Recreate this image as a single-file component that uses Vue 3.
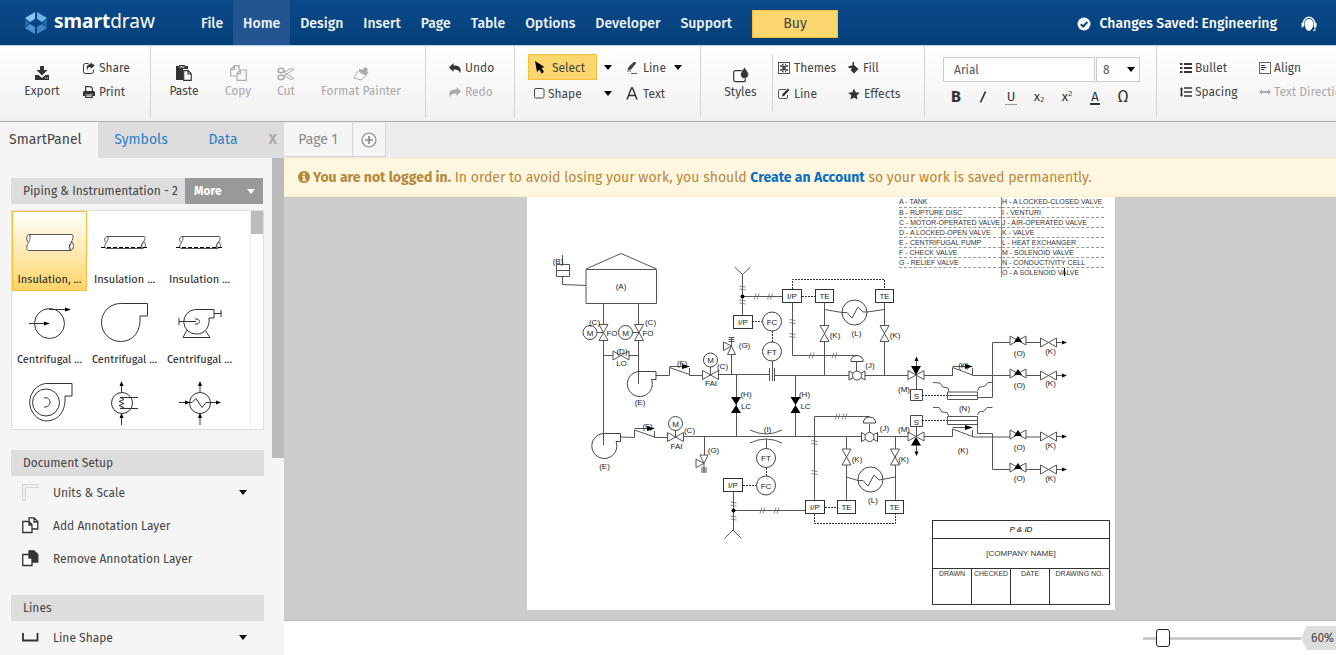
<script setup>
import { ref } from 'vue'

const menu = ['File', 'Home', 'Design', 'Insert', 'Page', 'Table', 'Options', 'Developer', 'Support']
const fontName = ref('Arial')
const zoom = ref(9)

const legend = [
  ['A - TANK', 'H - A LOCKED-CLOSED VALVE'],
  ['B - RUPTURE DISC', 'I - VENTURI'],
  ['C - MOTOR-OPERATED VALVE', 'J - AIR-OPERATED VALVE'],
  ['D - A LOCKED-OPEN VALVE', 'K - VALVE'],
  ['E - CENTRIFUGAL PUMP', 'L - HEAT EXCHANGER'],
  ['F - CHECK VALVE', 'M - SOLENOID VALVE'],
  ['G - RELIEF VALVE', 'N - CONDUCTIVITY CELL'],
  ['', 'O - A SOLENOID VALVE']
]

const pipes = [
  'M586 269.5H656.5V303.5H586ZM586 269L621 253.5L656.5 269',
  'M556.5 264.5H569.5V276.5H556.5ZM556.5 270.5H569.5M562.5 255V264M562.5 277V284.5L586 285.5',
  'M603.5 303V445M638.5 303V384M597 332.5H603M632.5 332.5H639',
  'M603.5 355.5H613M629 355.5H638.5',
  'M655.5 375.5H669.5V367.5L689.5 374.5M689.5 368V375.5H702M710.5 367V375',
  'M718 374.5H770M775 375.5H849M865 375.5H908M924 375.5H953',
  'M769.5 368V381M774.5 368V381M772.5 361V381',
  'M736.5 375V437M795.5 375V437M731.5 354V375',
  'M734.5 267L742.5 274.5L750.5 267M742.5 274V315M742.5 296.5H782',
  'M792.5 303V355.5H857M856.5 362V371',
  'M824.5 303V375M884.5 303V375',
  'M824.5 309.5L842 312.5H847L852 318L858 307L863 312H867L884.5 309.5',
  'M916.5 366V360M916.5 375V390M952.5 375.5V367.5L972.5 375M972.5 368V375.5H1010',
  'M1010 342.5H992.5V397.5H977.5M1026 342.5H1041M1056 342.5H1063M1026 375.5H1041M1056 375.5H1063',
  'M947.5 392H977.5V399.5H947.5ZM947.5 395.5H977.5M933 382.5L940 383L943 387L948 388L949 392M977.5 391L979 387.5L985 386L988 382.5H992',
  'M620.5 437L634.5 437.5V430L654.5 437M654.5 431V437.5H667M675.5 430V437',
  'M683 436.5H861M877 436.5H908M924 436.5H952.5V429L972.5 436.5M972.5 430V437H1010',
  'M704.5 437V455M766.5 439V448M733.5 491V530.5M733.5 510.5H805M724.5 538.5L733 530L741.5 538.5',
  'M750 430Q766 438 782 430M750 443Q766 435 782 443',
  'M814.5 500V416.5H869.5M869.5 424V432',
  'M846.5 437V500M895.5 437V500M846.5 477L858 480.5H863L868 486L874 475L879 480L895.5 477',
  'M916.5 427V437M916.5 445V452M1026 437H1041M1056 436.5H1063',
  'M977.5 424V433.5H992.5V469.5H1010M1026 469.5H1041M1056 469.5H1063',
  'M947.5 416.5H977.5V424.5H947.5ZM947.5 420.5H977.5M933 407.5H939L942 412L947 412.5L949 416M977.5 415L979 412L984 411L987 407.5H992.5',
  'M669.5 366.5H683M952.5 366.5H966M634.5 428.5H648M952.5 427.5H966'
]
const dashes = [
  'M792.5 289V279.5H884.5V289', 'M802 296.5H815', 'M752 321.5H762', 'M772.5 331V342', 'M922 395.5H947',
  'M922 420.5H947', 'M766.5 468V476', 'M743 485.5H756', 'M825 507.5H837', 'M814.5 514V523.5H895.5V514'
]
const boxes = [
  [782, 289, 20, 'I/P'], [815, 289, 19, 'TE'], [875, 289, 19, 'TE'], [733, 315, 20, 'I/P'],
  [723, 478, 20, 'I/P'], [805, 500, 20, 'I/P'], [837, 500, 19, 'TE'], [885, 500, 19, 'TE']
]
const circles = [
  [590, 332.5, 7, 'M'], [625.5, 332.5, 7, 'M'], [710.5, 360, 7, 'M'], [675.5, 423.5, 7, 'M'],
  [772, 321.5, 9.5, 'FC'], [772, 351.5, 9.5, 'FT'], [766, 458, 9.5, 'FT'], [766, 485.5, 9.5, 'FC']
]
const exchangers = [[854.5, 312.5], [870.5, 479.5]]
const valves = [
  [621, 355.5, 0], [603.5, 332.5, 90], [639, 332.5, 90], [710.5, 375, 0], [675.5, 437, 0],
  [824.5, 333.5, 90], [884.5, 333.5, 90], [846.5, 457, 90], [895, 457, 90],
  [916, 375, 0], [916, 436.5, 0], [1018, 340.5, 0], [1018, 373.5, 0], [1018, 434.5, 0], [1018, 467.5, 0],
  [1048.5, 342.5, 0], [1048.5, 375.5, 0], [1048.5, 436.5, 0], [1048.5, 469.5, 0]
]
const solids = [
  'M731 397H741L732 413H741Z', 'M731 397H741L736 405ZM731 413H741L736 405Z',
  'M790.5 397H800.5L795.5 405ZM790.5 413H800.5L795.5 405Z',
  'M911 366H921L916 375Z', 'M911 445.5H921L916 437Z',
  'M916.5 356.5L914.5 361H918.5ZM916.5 456L914.5 451.5H918.5Z',
  'M682 364V369L690 366.5ZM965 364V369L973 366.5ZM647 426V431L655 428.5ZM965 425V430L973 427.5Z',
  'M1014 342L1018 336L1022 342ZM1014 375L1018 369L1022 375ZM1014 436L1018 430L1022 436ZM1014 469L1018 463L1022 469Z',
  'M1062 340.5V344.5L1067 342.5ZM1062 373.5V377.5L1067 375.5ZM1062 434.5V438.5L1067 436.5ZM1062 467.5V471.5L1067 469.5Z'
].filter((_, i) => i > 0)
const hTicks = [[756, 296.5], [769.5, 296.5], [811, 355.5], [834, 355.5], [837, 416.5], [844, 416.5], [762, 510.5], [776, 510.5]]
const vTicks = [[742.5, 288], [742.5, 302], [792.5, 321.5], [792.5, 335.5], [814.5, 442.5], [814.5, 472.5], [733.5, 504], [733.5, 518]]
const labels = [
  [621, 285.5, '(A)'], [558, 260.5, '(B)'], [594.5, 322, '(C)'], [650.5, 322, '(C)'], [612, 333, 'FO'], [648, 333, 'FO'],
  [622, 351, '(D)'], [621.5, 362.5, 'LO'], [640, 401.5, '(E)'], [682, 362.5, '(F)'], [722.5, 365.5, '(C)'], [711, 382.5, 'FAI'],
  [744.5, 344.5, '(G)'], [746, 393.5, '(H)'], [746, 406, 'LC'], [804.5, 393.5, '(H)'], [805.5, 406, 'LC'],
  [856.5, 332.5, '(L)'], [835, 334.5, '(K)'], [895, 334.5, '(K)'], [870, 364.5, '(J)'], [904, 388.5, '(M)'], [963.5, 364.5, '(K)'],
  [1019.5, 352.5, '(O)'], [1050.5, 350.5, '(K)'], [1019.5, 384.5, '(O)'], [1050.5, 382.5, '(K)'], [964.5, 407.5, '(N)'],
  [604.5, 465.5, '(E)'], [647.5, 425.5, '(F)'], [689.5, 429.5, '(C)'], [676.5, 445.5, 'FAI'], [713.5, 449.5, '(G)'],
  [767.5, 428.5, '(I)'], [884.5, 427.5, '(J)'], [904, 428.5, '(M)'], [857, 458.5, '(K)'], [903.5, 458.5, '(K)'], [873, 499.5, '(L)'],
  [963, 449.5, '(K)'], [1019.5, 446.5, '(O)'], [1050.5, 444.5, '(K)'], [1019.5, 477.5, '(O)'], [1050.5, 477.5, '(K)'],
  [916.5, 395.5, 'S'], [916.5, 421.5, 'S']
]
</script>

<template>
  <div class="app">
    <header class="top">
      <a href="#" class="brand" aria-label="smartdraw">
        <svg width="24" height="24" viewBox="0 0 24 24">
          <path d="M11 1v7L6 11 1 7z" fill="#8ac4f8" /><path d="M13 1v7l5 3 5-4z" fill="#6fb2f0" />
          <path d="M1 8l5 4-5 4z" fill="#1f6aa8" /><path d="M23 8l-5 4 5 4z" fill="#1f6aa8" />
          <path d="M11 23v-7l-5-3-5 4z" fill="#4a92d2" /><path d="M13 23v-7l5-3 5 4z" fill="#3f86c6" />
        </svg>
        <span class="word"><b>smart</b>draw</span>
      </a>
      <nav class="menu">
        <a v-for="m in menu" :key="m" href="#" :class="{ on: m === 'Home' }">{{ m }}</a>
      </nav>
      <button class="buy">Buy</button>
      <div class="saved">
        <svg width="14" height="14" viewBox="0 0 14 14"><circle cx="7" cy="7" r="6.5" fill="#fff" /><path d="M3.8 7.2L6.2 9.5 10.4 4.8" fill="none" stroke="#06427e" stroke-width="2" /></svg>
        <span>Changes Saved: Engineering</span>
      </div>
      <button class="help" aria-label="Help">
        <svg width="16" height="16" viewBox="0 0 16 16"><path d="M2.5 10V7a5.5 5.8 0 0 1 11 0v4" fill="none" stroke="#fff" stroke-width="1.4" /><rect x=".5" y="6.5" width="2" height="5" rx="1" fill="#fff" /><rect x="13.5" y="6.5" width="2" height="5" rx="1" fill="#fff" /><path d="M8 3c3 0 4.300 2 4.300 5S10.500 14.500 8 15 3.700 11 3.700 8 5 3 8 3z" fill="#fff" /><path d="M14 11v3.500h-2" fill="none" stroke="#fff" /></svg>
      </button>
    </header>

    <div class="ribbon">
      <section class="group g-file">
        <button class="big"><svg width="16" height="16" viewBox="0 0 16 16" fill="#333"><path d="M6 1h4v4h3.500L8 10.500 2.500 5H6z" /><path d="M1 10h3.500L8 13l3.500-3H15v5H1z" /><path d="M11 13h1M13 13h1" stroke="#fff" /></svg><span>Export</span></button>
        <div class="stack">
          <button class="sm"><svg width="12" height="12" viewBox="0 0 12 12"><path d="M5.500 1.500h-3a2 2 0 0 0-2 2v6a2 2 0 0 0 2 2h6a2 2 0 0 0 2-2V8" fill="none" stroke="#333" /><path d="M7.500.500L11.800 3.500 7.500 7V5C5 4.800 4.300 6 4.300 9 2.800 5 4 2.300 7.500 2.300z" fill="#333" /></svg>Share</button>
          <button class="sm"><svg width="12" height="12" viewBox="0 0 12 12"><path d="M2.700 5V.700h5l1.600 1.600V5M2.700 9h6.600v2.400H2.700z" fill="#fff" stroke="#333" stroke-width="1.200" /><path d="M1 5h10l1 1v4H9.600V8H2.400v2H0V6z" fill="#333" /></svg>Print</button>
        </div>
      </section>
      <section class="group g-clip">
        <button class="big"><svg width="16" height="16" viewBox="0 0 16 16"><path d="M0 1h3V0h6v1h3v3H7v11H0z" fill="#333" /><path d="M3.500 2h5" stroke="#fff" /><path d="M7.700 5.700h4.500l3 3v6.600H7.700zM12 6v3h3" fill="#fff" stroke="#333" stroke-width="1.200" /></svg><span>Paste</span></button>
        <button class="big off"><svg width="17" height="16" viewBox="0 0 17 16" fill="none" stroke="#aaa" stroke-width="1.200"><path d="M9 5V.600H4.500L.600 4.500V11H7M4.500 1v3.500H1M7 8.500L10.500 5h5.700v10.300H7zM10.500 5v3.700H7" /></svg><span>Copy</span></button>
        <button class="big off"><svg width="18" height="14" viewBox="0 0 18 14" fill="none" stroke="#aaa" stroke-width="1.500"><ellipse cx="4" cy="3.500" rx="3" ry="2.200" /><ellipse cx="4" cy="10.500" rx="3" ry="2.200" /><path d="M6.500 5L17 11.500l-3 1L6.500 8.500M6.500 9L17 2.500l-3-1L6.500 5.500" stroke-width="1" /></svg><span>Cut</span></button>
        <button class="big off"><svg width="16" height="14" viewBox="0 0 16 14"><path d="M5 4L1 11l7 2 6-5" fill="#fff" stroke="#aaa" /><path d="M6 2l4 .500L12 0l3 2-1 2 1.500 2L12 8.500 6 5z" fill="#aaa" /></svg><span>Format Painter</span></button>
      </section>
      <section class="group g-undo">
        <div class="stack">
          <button class="sm"><svg width="12" height="12" viewBox="0 0 12 12"><path d="M4.500 1v2.500c5.500 0 8.500 2 6.500 8-.5-3-2-4-6.500-4V10L0 5.500z" fill="#333" /></svg>Undo</button>
          <button class="sm off"><svg width="12" height="12" viewBox="0 0 12 12"><path d="M7.500 1v2.500C2 3.500-1 5.500 1 11.500c.5-3 2-4 6.500-4V10L12 5.500z" fill="#aaa" /></svg>Redo</button>
        </div>
      </section>
      <section class="group g-tools">
        <button class="sm select"><svg width="12" height="13" viewBox="0 0 12 13"><path d="M1 0l9.500 6-3 1L10 11l-2.500 1.500-2-4L3 11z" fill="#000" /></svg>Select</button>
        <button class="drop" aria-label="Select options"><i class="caret"></i></button>
        <button class="sm line"><svg width="12" height="12" viewBox="0 0 12 12"><path d="M8 0l2 1-5 6-3 1 1-3zM1 9h4" fill="#444" stroke="#444" stroke-width=".800" /><path d="M5 11.500h6" stroke="#555" /></svg>Line</button>
        <button class="drop" aria-label="Line options"><i class="caret"></i></button>
        <button class="sm shape"><svg width="11" height="11" viewBox="0 0 11 11"><rect x=".500" y=".500" width="9.500" height="9.500" rx="1.500" fill="none" stroke="#444" /></svg>Shape</button>
        <button class="drop" aria-label="Shape options"><i class="caret"></i></button>
        <button class="sm line"><svg width="12" height="13" viewBox="0 0 12 13"><path d="M1 12.500L5.500 1h1L11 12.500M2.800 8.500h6.400" fill="none" stroke="#333" stroke-width="1.500" /></svg>Text</button>
      </section>
      <section class="group g-style">
        <button class="big styles"><svg width="16" height="17" viewBox="0 0 16 17"><rect x=".700" y="4.700" width="11.600" height="11" rx="2" fill="#fff" stroke="#333" stroke-width="1.200" /><path d="M11.500 1c2 3.500 4 5.500 4 7.500a4 4 0 0 1-8 0c0-2 2-4 4-7.500z" fill="#333" stroke="#fff" stroke-width=".600" /></svg><span>Styles</span></button>
        <div class="stylegrid">
          <button class="sm"><svg width="12" height="12" viewBox="0 0 12 12"><rect x=".500" y=".500" width="11" height="11" fill="none" stroke="#555" /><path d="M2 4h2M2 8h2M8 4h2M8 8h2M4 2.500h1.500M7 2.500h1M4 9.500h1.500M7 9.500h1M5 4.500h2v3H5z" stroke="#333" stroke-width="1.500" fill="none" /></svg>Themes</button>
          <button class="sm"><svg width="11" height="12" viewBox="0 0 11 12"><path d="M4.500 0h1.500v3l4.500 4-4.500 4.500-3.500-3.500L4 6.500 0 5.500l1-1.500 3.500-.500z" fill="#333" /></svg>Fill</button>
          <button class="sm"><svg width="12" height="12" viewBox="0 0 12 12"><path d="M8 1.500H2a1.500 1.500 0 0 0-1.500 1.500v6A1.500 1.500 0 0 0 2 10.500h6A1.500 1.500 0 0 0 9.500 9V7" fill="none" stroke="#555" /><path d="M10 .500l1.500 1.500L6 8l-2 .500L4.500 6z" fill="#333" /></svg>Line</button>
          <button class="sm"><svg width="12" height="12" viewBox="0 0 12 12"><path d="M6 .500l1.700 3.700 4 .500-3 2.800.800 4L6 9.500l-3.500 2 .800-4-3-2.800 4-.500z" fill="#333" /></svg>Effects</button>
        </div>
      </section>
      <section class="group g-font">
        <div class="fontrow">
          <input v-model="fontName" type="text" aria-label="Font" />
          <span class="size"><select aria-label="Font size"><option>8</option></select><i class="caret"></i></span>
        </div>
        <div class="marks">
          <button class="bold" aria-label="Bold">B</button>
          <button aria-label="Italic"><svg width="8" height="12" viewBox="0 0 8 12"><path d="M1.500 11.500L6.500.500" stroke="#333" stroke-width="1.700" /></svg></button>
          <button class="under" aria-label="Underline"><span>U</span></button>
          <button class="subs" aria-label="Subscript">x<small>2</small></button>
          <button class="subs" aria-label="Superscript">x<small class="up">2</small></button>
          <button class="color" aria-label="Text color"><span>A</span></button>
          <button class="omega" aria-label="Insert symbol">Ω</button>
        </div>
      </section>
      <section class="group g-para">
        <button class="sm"><svg width="12" height="10" viewBox="0 0 12 10"><path d="M0 1h2.500M0 5h2.500M0 9h2.500M4 1h8M4 5h8M4 9h8" stroke="#333" stroke-width="1.800" /></svg>Bullet</button>
        <button class="sm"><svg width="12" height="12" viewBox="0 0 12 12"><rect x=".500" y=".500" width="11" height="11" fill="none" stroke="#666" /><path d="M2 3.500h4M2 5.500h5.500M2 7.500h3.500" stroke="#333" /></svg>Align</button>
        <button class="sm"><svg width="12" height="10" viewBox="0 0 12 10"><path d="M1.500 1v8M4 1h8M4 5h8M4 9h8" stroke="#333" stroke-width="1.600" /><path d="M1.500 0L3 2.500H0zM1.500 10L3 7.500H0z" fill="#333" /></svg>Spacing</button>
        <button class="sm off"><svg width="12" height="6" viewBox="0 0 12 6"><path d="M0 3l3-3v2h6V0l3 3-3 3V4H3v2z" fill="#aaa" /></svg>Text Direction</button>
      </section>
    </div>

    <main class="work">
      <aside class="side">
        <div class="tabs">
          <button class="tab on">SmartPanel</button>
          <button class="tab">Symbols</button>
          <button class="tab">Data</button>
          <button class="close" aria-label="Close panel">X</button>
        </div>
        <div class="sidebody">
          <div class="panel">
            <div class="lib"><span>Piping &amp; Instrumentation - 2</span><button>More<i class="caret"></i></button></div>
            <div class="symbols">
              <div class="cells">
                <button class="cell on"><svg width="75" height="60" viewBox="0 0 75 60"><path d="M17 23.500H60c2 0 1 5-1 8s-1 8 0 8H16c-3-2 0-7 1-9s2-7 0-7c-3 1-3 5-1 8M60 31c2 2 2 8-1 8s-2-6 1-8" fill="#fff" stroke="#555" /></svg><span>Insulation, ...</span></button>
                <button class="cell"><svg width="75" height="60" viewBox="0 0 75 60"><path d="M20 25.500H57c2 0 1 4-1 6s-1 6 0 6H19c-3-2 0-5 1-7s2-5 0-5c-3 1-3 4-1 6M57 31c2 2 2 6-1 6s-2-4 1-6" fill="#fff" stroke="#555" /><path d="M14 36.500H61" stroke="#000" stroke-dasharray="4 2" /></svg><span>Insulation ...</span></button>
                <button class="cell"><svg width="75" height="60" viewBox="0 0 75 60"><path d="M20 25.500H57c2 0 1 4-1 6s-1 6 0 6H19c-3-2 0-5 1-7s2-5 0-5c-3 1-3 4-1 6M57 31c2 2 2 6-1 6s-2-4 1-6" fill="#fff" stroke="#555" /><path d="M14 36.500H61" stroke="#000" stroke-dasharray="4 2" /></svg><span>Insulation ...</span></button>
                <button class="cell"><svg width="75" height="60" viewBox="0 0 75 60" fill="none" stroke="#333"><circle cx="37.500" cy="32.500" r="15" /><path d="M17 32.500H33M37 18.500H54" /><path d="M32 30.500v4l6-2zM53 16.500v4l6-2z" fill="#000" stroke="none" /></svg><span>Centrifugal ...</span></button>
                <button class="cell"><svg width="75" height="60" viewBox="0 0 75 60" fill="none" stroke="#333"><path d="M33.500 12.500H60.500V25H53C54 41 46 50.500 33.500 50.500A19 19 0 0 1 33.500 12.500z" /></svg><span>Centrifugal ...</span></button>
                <button class="cell"><svg width="75" height="60" viewBox="0 0 75 60" fill="none" stroke="#333"><path d="M33.500 18.500H52V27H47C48 36 43 43 34.500 43A12 12 0 0 1 33.500 18.500zM52 22.500H59M59 19V26M17 30.500H34M17 27V34M25 39L21 46.500H48L43 39M33 28c6-1 6 6 0 5" /></svg><span>Centrifugal ...</span></button>
                <button class="cell"><svg width="75" height="60" viewBox="0 0 75 60" fill="none" stroke="#333"><path d="M33.500 12.500H60V25H53C54 41 46 50 33.500 50A19 19 0 0 1 33.500 12.500z" /><circle cx="34" cy="31.500" r="13.500" /><path d="M32 27c8-2 8 10 0 9" /></svg></button>
                <button class="cell"><svg width="75" height="60" viewBox="0 0 75 60" fill="none" stroke="#333"><circle cx="35" cy="32" r="10.500" /><path d="M34.500 21V13M34.500 43V54M51 26.500H33l4 2-5 2 5 2-5 2 5 2-4 1H51" /><path d="M32.500 15h4l-2-5zM32.500 47h4l-2-5z" fill="#000" stroke="none" /></svg></button>
                <button class="cell"><svg width="75" height="60" viewBox="0 0 75 60" fill="none" stroke="#333"><circle cx="38" cy="32" r="10.500" /><path d="M38 21V13M38 43V54M17 31.500H30l4-4 6 9 4-5H55" /><path d="M36 15h4l-2-5zM36 47h4l-2-5zM23 29.500v4l5-2zM54 29.500v4l5-2z" fill="#000" stroke="none" /></svg></button>
              </div>
              <div class="track"><i></i></div>
            </div>
            <h2>Document Setup</h2>
            <button class="row"><svg width="17" height="17" viewBox="0 0 17 17"><path d="M.500 16.500V.500H16.500V3.500H3.500V16.500z" fill="#eee" stroke="#bbb" stroke-dasharray="1 1" /></svg>Units &amp; Scale<i class="caret"></i></button>
            <button class="row"><svg width="17" height="17" viewBox="0 0 17 17" fill="#fff" stroke="#333" stroke-width="1.300"><path d="M7 4V.800H12L15.800 4.500V12H10M12 1v4h4M.800 4.500H7l3 3v8H.800zM7 4.500v3.500h3" /></svg>Add Annotation Layer</button>
            <button class="row"><svg width="17" height="17" viewBox="0 0 17 17" stroke="#333" stroke-width="1.300"><path d="M7 4V.800H12L15.800 4.500V12H10z" fill="#333" /><path d="M.800 4.500H7l3 3v8H.800zM7 4.500v3.500h3" fill="#fff" /></svg>Remove Annotation Layer</button>
            <h2>Lines</h2>
            <button class="row"><svg width="17" height="9" viewBox="0 0 17 9"><path d="M1 0V7.500H15.500V0" fill="none" stroke="#333" stroke-width="1.800" /></svg>Line Shape<i class="caret"></i></button>
          </div>
          <div class="scroll"><i></i></div>
        </div>
      </aside>

      <div class="doc">
        <div class="pages">
          <button class="page">Page 1</button>
          <button class="plus" aria-label="Add page"><svg width="16" height="16" viewBox="0 0 16 16" fill="none" stroke="#888" stroke-width="1.200"><circle cx="8" cy="8" r="7" /><path d="M8 4v8M4 8h8" stroke-width="1.600" /></svg></button>
        </div>
        <p class="alert">
          <svg width="12" height="12" viewBox="0 0 12 12"><circle cx="6" cy="6" r="6" fill="#b4893c" /><path d="M5 2h2v1.700H5zM4.300 4.800H7v3.800h1V10H4.200V8.600h1V6.200h-.900z" fill="#fff6df" /></svg>
          <b>You are not logged in.</b> In order to avoid losing your work, you should <a href="#">Create an Account</a> so your work is saved permanently.
        </p>
        <div class="canvas">
          <div class="sheet">
            <svg class="diagram" viewBox="527 197 588 413">
              <defs>
                <path id="bow" d="M-8 -4.500V4.500L8 -4.500V4.500Z" fill="#fff" stroke="#555" />
                <path id="pump" d="M0 -12.500H17V-4.500H12.500A12.500 12.500 0 1 1 0 -12.500" fill="none" stroke="#444" />
                <g id="air" fill="#fff" stroke="#444"><path d="M-8 -4.500V4.500L8 -4.500V4.500Z" /><circle r="4.500" /><path d="M-6 -14V-16Q-5 -20 0 -20T6 -16V-14Z" /></g>
                <path id="relief" d="M0 0L-4 8.500H4ZM0 0L-8 -4V4.500ZM0 0V-9M-3 -8.500H3M-3 -6.500H3M-3 -4.500H3" fill="#fff" stroke="#555" />
              </defs>
              <g fill="none" stroke="#555"><path v-for="(d, i) in pipes" :key="i" :d="d" /></g>
              <g fill="none" stroke="#333" stroke-dasharray="2 1"><path v-for="(d, i) in dashes" :key="i" :d="d" /></g>
              <use v-for="(v, i) in valves" :key="'v' + i" href="#bow" :transform="`translate(${v[0]} ${v[1]}) rotate(${v[2]})`" />
              <use href="#pump" transform="translate(639 384)" />
              <use href="#pump" transform="translate(603.500 446)" />
              <use href="#air" transform="translate(857 375.500)" />
              <use href="#air" transform="translate(869.500 437)" />
              <use href="#relief" transform="translate(731.500 346)" />
              <use href="#relief" transform="translate(704 463.500) scale(1 -1)" />
              <g fill="none" stroke="#444">
                <circle v-for="(e, i) in exchangers" :key="i" :cx="e[0]" :cy="e[1]" r="12.500" />
              </g>
              <g fill="none" stroke="#666" stroke-width=".800">
                <path v-for="(t, i) in hTicks" :key="'h' + i" :d="`M${t[0] - 2} ${t[1] + 3}l2 -6M${t[0] + 1} ${t[1] + 3}l2 -6`" />
                <path v-for="(t, i) in vTicks" :key="'t' + i" :d="`M${t[0] - 3} ${t[1] - 2}l6 1M${t[0] - 3} ${t[1] + 1}l6 1`" />
              </g>
              <g fill="#000"><path v-for="(d, i) in solids" :key="i" :d="d" /><circle cx="742.500" cy="296.500" r="2" /><circle cx="733.500" cy="510.500" r="2" /></g>
              <g v-for="(c, i) in circles" :key="'c' + i"><circle :cx="c[0]" :cy="c[1]" :r="c[2]" fill="#fff" stroke="#444" /><text :x="c[0]" :y="c[1] + 3">{{ c[3] }}</text></g>
              <g v-for="(b, i) in boxes" :key="'b' + i"><rect :x="b[0] + 0.5" :y="b[1] + 0.5" :width="b[2] - 1" height="13" fill="#fff" stroke="#333" /><text :x="b[0] + b[2] / 2" :y="b[1] + 10">{{ b[3] }}</text></g>
              <path d="M910.500 389.500H922.500V400.500H910.500ZM910.500 415.500H922.500V426.500H910.500Z" fill="#fff" stroke="#444" />
              <text v-for="(l, i) in labels" :key="'l' + i" :x="l[0]" :y="l[1] + 3">{{ l[2] }}</text>
            </svg>
            <table class="legend">
              <tbody><tr v-for="(r, i) in legend" :key="i"><td>{{ r[0] }}</td><td>{{ r[1] }}</td></tr></tbody>
            </table>
            <i class="cursor"></i>
            <table class="title">
              <colgroup><col class="c1" /><col class="c1" /><col class="c1" /><col /></colgroup>
              <tbody>
                <tr class="t1"><td colspan="4">P &amp; ID</td></tr>
                <tr class="t2"><td colspan="4">[COMPANY NAME]</td></tr>
                <tr class="t3"><td>DRAWN</td><td>CHECKED</td><td>DATE</td><td>DRAWING NO.</td></tr>
              </tbody>
            </table>
          </div>
        </div>
        <footer class="status">
          <input v-model="zoom" type="range" min="0" max="100" aria-label="Zoom" />
          <output>60%</output>
        </footer>
      </div>
    </main>
  </div>
</template>

<style>
html, body { overflow: hidden; }
</style>

<style scoped>
.app { height: 100vh; display: flex; flex-direction: column; overflow: hidden; font: 12px/16px "Fira Sans", "Noto Sans", sans-serif; color: #444; background: #f5f5f5; }
.app * { box-sizing: border-box; }
button { font: inherit; color: inherit; background: none; border: 0; padding: 0; margin: 0; white-space: nowrap; }
a { text-decoration: none; }
svg { flex: none; display: block; }
.caret { width: 0; height: 0; border: 4px solid transparent; border-top: 5px solid #000; border-bottom: 0; }

.top { flex: none; height: 46px; display: flex; align-items: center; background: linear-gradient(#0a4a8a, #053f78); border-bottom: 1px solid #bcd0e4; color: #fff; overflow: hidden; }
.brand { flex: none; display: flex; align-items: center; gap: 6px; width: 191px; padding-left: 24px; color: #fff; }
.word { font: 19px/24px "Noto Sans", sans-serif; padding-bottom: 3px; }
.menu { display: flex; align-self: stretch; }
.menu a { padding: 0 10px; line-height: 47px; font-size: 14px; font-weight: 500; color: #f0f5fa; }
.menu a.on { background: #225590; }
.buy { flex: none; width: 86px; height: 28px; margin: 2px 0 0 10px; background: #fcd76e; border: 1px solid #fbbc37; color: #444; font-size: 14px; }
.saved { flex: none; margin-left: auto; display: flex; align-items: center; gap: 8px; font-size: 14px; font-weight: 500; white-space: nowrap; padding-top: 3px; }
.help { margin: 2px 19px 0 24px; }

.ribbon { flex: none; height: 76px; display: flex; padding-bottom: 4px; background: linear-gradient(#fff, #f1f1f1); border-bottom: 1px solid #aaa; overflow: hidden; }
.group { flex: none; display: flex; border-right: 1px solid #d4d4d4; }
.big { display: flex; flex-direction: column; align-items: center; justify-content: flex-end; gap: 2px; height: 53px; }
.off { color: #aaa; }
.sm { display: flex; align-items: center; gap: 4px; height: 24px; }
.stack { display: flex; flex-direction: column; padding-top: 10px; }
.g-file { width: 151px; padding-left: 17px; }
.g-file .big { width: 50px; margin-right: 16px; }
.g-clip { width: 275px; padding-left: 8px; }
.g-clip .big { width: 50px; }
.g-clip .big:nth-child(2) { width: 58px; }
.g-clip .big:nth-child(3) { width: 38px; }
.g-clip .big:nth-child(4) { width: 112px; }
.g-undo { width: 89px; padding-left: 23px; }
.g-tools { width: 186px; padding: 8px 0 0 13px; display: grid; grid-template-columns: 69px 29px 47px 26px; grid-auto-rows: 26px; align-content: start; }
.g-tools .sm { height: 27px; }
.g-tools .select { height: 26px; padding: 1px 0 0 5px; gap: 6px; background: #fcd76e; border: 1px solid #fbbc37; color: #444; }
.drop { display: flex; align-items: center; padding-left: 7px; }
.g-tools .drop:nth-child(4) { padding-left: 1px; }
.shape { padding-left: 6px; gap: 3px; }
.line { gap: 5px; }
.g-style { width: 224px; padding-left: 8px; }
.styles { width: 63px; height: 54px; gap: 1px; }
.stylegrid { margin: 8px 0 6px; padding: 2px 0 0 5px; border-left: 1px solid #d4d4d4; display: grid; grid-template-columns: 70px 60px; grid-auto-rows: 26px; align-content: start; }
.g-font { width: 232px; flex-direction: column; padding: 11px 0 0 18px; }
.fontrow { display: flex; gap: 1px; }
.fontrow input { width: 152px; height: 25px; border: 1px solid #ccc; padding: 0 10px; font: inherit; color: #555; background: #fff; }
.size { position: relative; }
.size select { appearance: none; width: 44px; height: 25px; border: 1px solid #ccc; border-radius: 0; padding: 0 6px; font: inherit; color: #555; background: #fff; }
.size .caret { position: absolute; right: 5px; top: 10px; }
.marks { display: grid; grid-template-columns: 26px repeat(6, 28px); margin-top: 4px; height: 22px; font-size: 13px; color: #333; }
.marks button { display: flex; align-items: center; justify-content: center; }
.bold { font-weight: 700; font-size: 16px; }
.under span { border-bottom: 1px solid #999; line-height: 14px; padding: 0 2px; }
.color span { border-bottom: 2px solid #333; line-height: 13px; padding: 0 1px; }
.subs small { font-size: 8px; padding-top: 6px; }
.subs small.up { padding: 0 0 6px; }
.omega { font-size: 16px; }
.g-para { border: 0; width: 220px; padding: 10px 0 0 23px; display: grid; grid-template-columns: 79px 118px; grid-auto-rows: 24px; align-content: start; }
.g-para .sm { gap: 3px; }

.work { flex: 1; min-height: 0; display: flex; }
.side { flex: none; width: 284px; display: flex; flex-direction: column; min-height: 0; }
.tabs { flex: none; height: 36px; display: flex; background: #ddd; font-size: 14px; }
.tab { color: #2a7dc4; width: 86px; }
.tab.on { width: 98px; background: #f5f5f5; color: #444; text-align: left; padding-left: 9px; }
.tab:nth-child(3) { width: 78px; }
.close { margin-left: auto; padding-right: 7px; color: #aaa; font-weight: 700; }
.sidebody { flex: 1; min-height: 0; display: flex; }
.panel { flex: 1; padding: 20px 8px 0 11px; overflow: hidden; }
.lib { display: flex; height: 26px; margin-right: 1px; background: #ddd; line-height: 26px; white-space: nowrap; }
.lib span { flex: 1; min-width: 0; padding-left: 12px; overflow: hidden; }
.lib button { flex: none; width: 78px; background: #999; color: #fff; font-weight: 700; display: flex; align-items: center; justify-content: space-between; padding: 0 8px 0 9px; }
.lib .caret { border-top-color: #fff; }
.symbols { margin-top: 6px; height: 220px; display: flex; background: #fff; border: 1px solid #ddd; overflow: hidden; }
.cells { flex: 1; display: grid; grid-template-columns: repeat(3, 75px); grid-auto-rows: 80px; }
.cell { display: flex; flex-direction: column; align-items: center; justify-content: flex-start; border: 1px solid transparent; color: #222; font-size: 11px; overflow: hidden; }
.cell svg { margin: -1px -1px 0; }
.cell span { line-height: 18px; }
.cell.on { border-color: #fbbc37; background: linear-gradient(#fff, #fcd468); }
.track { width: 13px; border-left: 1px solid #eee; }
.track i { display: block; height: 23px; background: #bbb; }
h2 { margin: 20px 0 0; height: 26px; padding-left: 12px; background: #ddd; font: inherit; line-height: 26px; }
.row { display: flex; align-items: center; width: 100%; height: 33px; padding: 0 17px 0 11px; gap: 14px; }
.row .caret { margin-left: auto; }
.scroll { width: 12px; background: #f5f5f5; }
.scroll i { display: block; height: 300px; background: #bbb; }

.doc { flex: 1; min-width: 0; display: flex; flex-direction: column; }
.pages { flex: none; height: 36px; padding: 1px 0; display: flex; background: #ececec; }
.page, .plus { background: #f5f5f5; border: 1px solid #d4d4d4; border-width: 0 1px 1px 0; color: #888; font-size: 14px; width: 69px; }
.plus { width: 33px; display: flex; align-items: center; justify-content: center; }
.alert { flex: none; display: block; height: 39px; margin: 0; padding: 0 14px; background: #fff6df; border: 1px solid #fbeed0; border-width: 1px 0; color: #b4893c; font-size: 14px; line-height: 37px; white-space: nowrap; overflow: hidden; }
.alert svg { display: inline-block; vertical-align: -1px; margin-right: 3px; }
.alert a { color: #0b6fbe; font-weight: 700; }
.canvas { flex: 1; min-height: 0; display: flex; justify-content: center; align-items: flex-start; padding-left: 22px; background: #ccc; overflow: hidden; }
.sheet { flex: none; position: relative; width: 588px; background: #fff; font-family: "Liberation Sans", Arial, sans-serif; color: #333; }
.diagram { width: 100%; }
.diagram text { font-size: 8px; text-anchor: middle; fill: #222; }
table { border-collapse: collapse; table-layout: fixed; position: absolute; }
td { padding: 0; }
.legend { left: 372px; top: 0; width: 205px; font-size: 7px; line-height: 9px; white-space: nowrap; }
.legend td { height: 10px; border-bottom: 1px dashed #999; }
.legend td + td { border-left: 1px solid #888; }
.legend tr:last-child td { border-bottom: 0; }
.cursor { position: absolute; left: 537px; top: 71px; width: 1px; height: 8px; background: #000; }
.title { right: 5px; bottom: 5px; width: 178px; font-size: 7px; line-height: 9px; text-align: center; white-space: nowrap; }
.title td { border: 1px solid #333; }
.title .c1 { width: 39px; }
.title .t1 { height: 18px; font-size: 8px; font-style: italic; color: #000; }
.title .t2 { height: 30px; font-size: 8px; }
.title .t3 { height: 36px; vertical-align: top; }
.status { flex: none; height: 35px; display: flex; align-items: center; justify-content: flex-end; background: #fff; border-top: 1px solid #bbb; }
.status input { appearance: none; width: 158px; height: 18px; margin: 0; background: linear-gradient(#ccc, #ccc) center / 100% 3px no-repeat; }
.status input::-webkit-slider-thumb { appearance: none; width: 14px; height: 18px; background: #fff; border: 1px solid #222; border-radius: 3px; }
.status output { width: 35px; height: 24px; line-height: 24px; padding-left: 10px; background: #ddd; clip-path: polygon(0 50%, 6px 0, 100% 0, 100% 100%, 6px 100%); }
</style>
